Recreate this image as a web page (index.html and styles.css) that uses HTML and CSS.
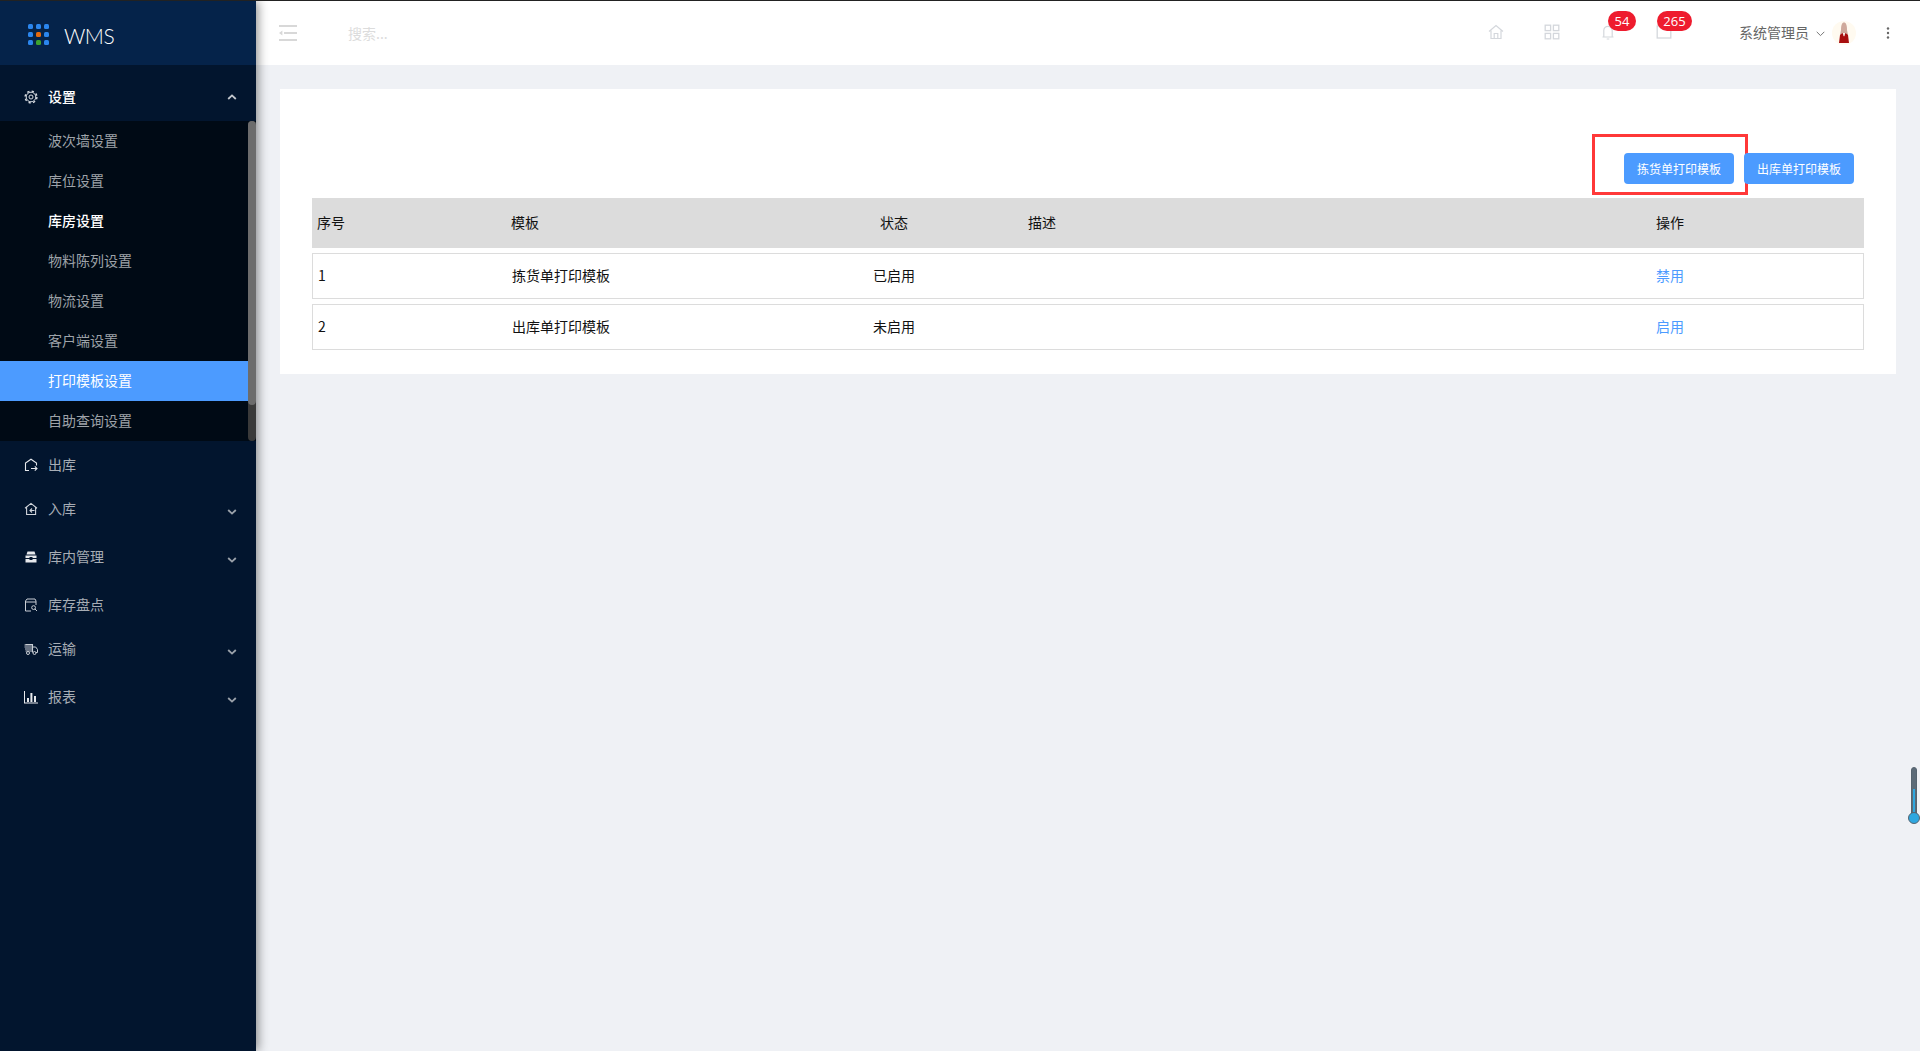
FILE: index.html
```html
<!DOCTYPE html>
<html lang="zh-CN">
<head>
<meta charset="utf-8">
<title>WMS</title>
<link rel="stylesheet" href="styles.css">
</head>
<body>
<div class="app">
  <aside class="sidebar">
    <div class="brand">
      <svg class="brand-dots" width="24" height="24" viewBox="0 0 24 24">
        <g fill="#2b86ee">
          <rect x="2" y="2" width="5" height="5" rx="1.5"/><rect x="10" y="2" width="5" height="5" rx="1.5"/><rect x="18" y="2" width="5" height="5" rx="1.5"/>
          <rect x="2" y="10" width="5" height="5" rx="1.5"/><rect x="18" y="10" width="5" height="5" rx="1.5"/>
          <rect x="2" y="18" width="5" height="5" rx="1.5"/><rect x="18" y="18" width="5" height="5" rx="1.5"/>
        </g>
        <rect x="10" y="10" width="5" height="5" rx="1.5" fill="#e8690c"/>
        <rect x="10" y="18" width="5" height="5" rx="1.5" fill="#3da32f"/>
      </svg>
      <span class="brand-name">WMS</span>
    </div>
    <nav class="nav">
      <a class="nav-item nav-open">
        <svg class="nav-icon" viewBox="0 0 14 14" fill="none" stroke="#d8dce2"><circle cx="7" cy="7" r="4.800" stroke-width="1"/><circle cx="7" cy="7" r="5.900" stroke-width="1.400" stroke-dasharray="2.300 2.330"/><circle cx="7" cy="7" r="2" stroke-width="1"/></svg>
        <span class="nav-label">设置</span>
        <svg class="nav-chevron" viewBox="0 0 10 6" fill="none" stroke="#c4c8ce" stroke-width="1.8"><path d="M1.200 5L5 1.400 8.800 5"/></svg>
      </a>
      <div class="submenu">
        <div class="submenu-list">
          <a class="sub-item">波次墙设置</a>
          <a class="sub-item">库位设置</a>
          <a class="sub-item sub-hover">库房设置</a>
          <a class="sub-item">物料陈列设置</a>
          <a class="sub-item">物流设置</a>
          <a class="sub-item">客户端设置</a>
          <a class="sub-item sub-active">打印模板设置</a>
          <a class="sub-item">自助查询设置</a>
        </div>
        <div class="scrollbar"><div class="scroll-thumb"></div></div>
      </div>
      <a class="nav-item nav-tall">
        <svg class="nav-icon" viewBox="0 0 14 14" fill="none" stroke="#e6e8ec" stroke-width="1.100"><path d="M2 12.500h-.5V5L7 1.200 12.500 5v2.500M7 10.500h6M10.800 8.300L13 10.500l-2.200 2.200M2 12.500h3"/></svg>
        <span class="nav-label">出库</span>
      </a>
      <a class="nav-item nav-short">
        <svg class="nav-icon" viewBox="0 0 14 14" fill="none" stroke="#d0d4da" stroke-width="1.100"><path d="M1 6.200L7 1.400l6 4.800M2.600 5.500v7h9v-7M10.500 8.500H6M8 6.500l-2 2 2 2"/></svg>
        <span class="nav-label">入库</span>
        <svg class="nav-chevron" viewBox="0 0 10 6" fill="none" stroke="#9aa1aa" stroke-width="1.800"><path d="M1.200 1L5 4.600 8.800 1"/></svg>
      </a>
      <a class="nav-item nav-tall">
        <svg class="nav-icon" viewBox="0 0 14 14" fill="#e6e8ec"><path d="M3.500 1.500h7l1 3h-9zM1.500 5.500h11v2.500h-4v-1h-3v1h-4zM1.500 9h4v1h3V9h4v3.500h-11z"/></svg>
        <span class="nav-label">库内管理</span>
        <svg class="nav-chevron" viewBox="0 0 10 6" fill="none" stroke="#9aa1aa" stroke-width="1.800"><path d="M1.200 1L5 4.600 8.800 1"/></svg>
      </a>
      <a class="nav-item nav-tall">
        <svg class="nav-icon" viewBox="0 0 14 14" fill="none" stroke="#c9ced5" stroke-width="1"><path d="M7 13H1.500V3L3 1h8l1 2v4M1.500 4h10.500"/><circle cx="9.600" cy="9.600" r="1.900"/><path d="M11 11l2 2"/></svg>
        <span class="nav-label">库存盘点</span>
      </a>
      <a class="nav-item nav-short">
        <svg class="nav-icon" viewBox="0 0 14 14" fill="none" stroke="#c9ced5"><path d="M.5 3h8M.5 5h8M1 7h7.500M1.500 9h7M1.500 2.500h7v8" stroke-width="1.100"/><path d="M9 5h2.700l1.800 2.500v3H12" stroke-width="1"/><circle cx="4" cy="11" r="1.500" stroke-width="1"/><circle cx="10.500" cy="11" r="1.500" stroke-width="1"/></svg>
        <span class="nav-label">运输</span>
        <svg class="nav-chevron" viewBox="0 0 10 6" fill="none" stroke="#9aa1aa" stroke-width="1.800"><path d="M1.200 1L5 4.600 8.800 1"/></svg>
      </a>
      <a class="nav-item nav-tall">
        <svg class="nav-icon" viewBox="0 0 14 14" fill="#e6e8ec"><path d="M0 1h1v11.500h13.500v1H0z"/><path d="M3 8h2v4H3zM6.400 3h2v9h-2zM10 6h2v6h-2z"/></svg>
        <span class="nav-label">报表</span>
        <svg class="nav-chevron" viewBox="0 0 10 6" fill="none" stroke="#9aa1aa" stroke-width="1.800"><path d="M1.200 1L5 4.600 8.800 1"/></svg>
      </a>
    </nav>
  </aside>

  <div class="main">
    <header class="topbar">
      <svg class="menu-toggle" width="18" height="16" viewBox="0 0 18 16" fill="#d8d8d8"><rect width="18" height="2" y="0"/><rect width="13" height="2" x="5" y="7"/><rect width="18" height="2" y="14"/><path d="M0 8l3.400-2.600v5.200z"/></svg>
      <span class="search">搜索...</span>
      <div class="top-actions">
        <span class="top-icon"><svg width="16" height="16" viewBox="0 0 16 16" fill="none" stroke="#d4d7dc" stroke-width="1.200"><path d="M1 7.500L8 1.500l7 6M3 6.500v8h10v-8M6.200 14.500v-5h3.600v5"/></svg></span>
        <span class="top-icon"><svg width="16" height="16" viewBox="0 0 16 16" fill="none" stroke="#d4d7dc" stroke-width="1.300"><rect x="1.200" y="1.200" width="5.400" height="5.400"/><rect x="9.400" y="1.200" width="5.400" height="5.400"/><rect x="1.200" y="9.400" width="5.400" height="5.400"/><rect x="9.400" y="9.400" width="5.400" height="5.400"/></svg></span>
        <span class="top-icon"><svg width="16" height="16" viewBox="0 0 16 16" fill="none" stroke="#d4d7dc" stroke-width="1.200"><path d="M2.500 13h11M3.800 13V6.500a4.200 4.200 0 018.400 0V13M6.700 15h2.600"/></svg><span class="badge badge-bell">54</span></span>
        <span class="top-icon"><svg width="16" height="16" viewBox="0 0 16 16" fill="none" stroke="#d4d7dc" stroke-width="1.300"><rect x="1.200" y="2" width="13.600" height="12"/></svg><span class="badge badge-mail">265</span></span>
      </div>
      <div class="user">
        <span class="user-name">系统管理员</span>
        <svg class="user-chevron" width="9" height="6" viewBox="0 0 9 6" fill="none" stroke="#777" stroke-width="1"><path d="M.7.800L4.500 4.600 8.300.800"/></svg>
        <svg class="avatar" width="24" height="24" viewBox="0 0 24 24"><circle cx="12" cy="12" r="12" fill="#fffaf0"/><path d="M9 9c0-5 1-7.500 3-7.500S15 4 15 9l1 5H8z" fill="#cfa99c"/><path d="M7 22l1-8 2.500-2L12 15.500 13.500 12l2.500 2 1 8z" fill="#a80f0f"/><path d="M11 12h2l-1 3.500z" fill="#fff"/></svg>
      </div>
      <svg class="more" width="4" height="12" viewBox="0 0 4 12" fill="#666"><circle cx="2" cy="1.500" r="1.200"/><circle cx="2" cy="6" r="1.200"/><circle cx="2" cy="10.500" r="1.200"/></svg>
    </header>

    <main class="content">
      <section class="card">
        <div class="toolbar">
          <button class="btn btn-marked">拣货单打印模板<span class="marker"></span></button>
          <button class="btn">出库单打印模板</button>
        </div>
        <div class="table">
          <div class="thead grid">
            <span class="c-no">序号</span>
            <span>模板</span>
            <span class="c-center">状态</span>
            <span>描述</span>
            <span>操作</span>
          </div>
          <div class="trow grid">
            <span class="c-no">1</span>
            <span class="c-name">拣货单打印模板</span>
            <span class="c-center">已启用</span>
            <span></span>
            <a class="link">禁用</a>
          </div>
          <div class="trow grid">
            <span class="c-no">2</span>
            <span class="c-name">出库单打印模板</span>
            <span class="c-center">未启用</span>
            <span></span>
            <a class="link">启用</a>
          </div>
        </div>
      </section>
    </main>
  </div>
</div>
<div class="thermo"><div class="thermo-tube"><div class="thermo-fill"></div></div><div class="thermo-bulb"></div></div>
</body>
</html>
```
FILE: styles.css
```css
* { box-sizing: border-box; }
html, body { margin: 0; height: 100%; overflow: hidden; }
body {
  font-family: "Noto Sans CJK SC", "Noto Sans", sans-serif;
  font-size: 14px;
  color: #111;
  background: #eff1f5;
  border-top: 1px solid #222;
}
a { color: inherit; text-decoration: none; }

.app { display: flex; height: 1050px; }

.sidebar {
  width: 256px;
  flex: none;
  background: #02152e;
  box-shadow: 2px 0 10px rgba(0, 0, 0, .45);
  position: relative;
  z-index: 2;
}
.brand {
  height: 64px;
  background: #05234a;
  display: flex;
  align-items: center;
  padding-left: 26px;
}
.brand-dots { margin-top: 2px; }
.brand-name {
  margin-left: 14px;
  color: #fff;
  font-family: Lato, sans-serif;
  font-weight: 300;
  font-size: 21px;
  letter-spacing: -.5px;
  line-height: 1;
  margin-top: 4px;
}
.nav-item {
  display: flex;
  align-items: center;
  padding-left: 24px;
  padding-right: 19px;
  color: #a7adb5;
}
.nav-open { height: 56px; color: #fff; font-weight: 500; }
.nav-tall { height: 48px; }
.nav-short { height: 44px; }
.nav-icon { width: 14px; height: 14px; flex: none; }
.nav-label { margin-left: 10px; flex: 1; line-height: 20px; padding-bottom: 2px; }
.nav-chevron { width: 10px; height: 6px; flex: none; }
.nav-open .nav-label { padding-bottom: 0; padding-top: 6px; }
.nav-open .nav-icon { margin-top: 8px; }
.nav-open .nav-chevron { margin-top: 8px; }
.nav-tall .nav-chevron { margin-top: 6px; }
.nav-short .nav-chevron { margin-top: 2px; }
.nav-short .nav-label { padding-bottom: 6px; }
.nav-short .nav-icon { margin-bottom: 4px; }

.submenu { display: flex; height: 320px; background: #000a15; }
.submenu-list { flex: 1; }
.sub-item {
  display: block;
  height: 40px;
  line-height: 38px;
  padding-left: 48px;
  color: #9ea3a9;
}
.sub-hover { color: #fff; font-weight: 500; }
.sub-active { background: #4c9bff; color: #fff; }
.scrollbar { width: 8px; background: #3a3a3a; border-radius: 4px; }
.scroll-thumb { height: 284px; background: #6c6c6c; border-radius: 4px; }

.main { flex: 1; display: flex; flex-direction: column; min-width: 0; }
.topbar {
  height: 64px;
  background: #fff;
  display: flex;
  align-items: center;
}
.menu-toggle { margin-left: 23px; }
.search { margin-left: 51px; color: #dcdcdc; }
.top-actions { margin-left: auto; display: flex; gap: 40px; margin-top: -2px; }
.top-icon { position: relative; width: 16px; height: 16px; display: block; }
.top-icon svg { display: block; }
.badge {
  position: absolute;
  top: -13px;
  height: 20px;
  line-height: 20px;
  border-radius: 10px;
  background: #ee1c2e;
  color: #fff;
  font-family: "Open Sans", sans-serif;
  font-size: 13px;
  text-align: center;
}
.badge-bell { left: 8px; width: 28px; }
.badge-mail { left: 1px; width: 35px; }
.user { display: flex; align-items: center; margin-left: 67px; }
.user-name { color: #666; line-height: 20px; padding-bottom: 3px; }
.user-chevron { margin-left: 7px; margin-top: 1px; }
.avatar { margin-left: 7px; }
.more { margin-left: 30px; margin-right: 30px; }

.content { flex: 1; padding: 24px 24px 0; }
.card { background: #fff; height: 285px; padding: 64px 32px 0; }
.toolbar { display: flex; justify-content: flex-end; gap: 10px; padding-right: 10px; height: 45px; }
.btn {
  width: 110px;
  height: 31px;
  padding: 0 0 1px;
  border: 0;
  border-radius: 4px;
  background: #4c9bff;
  color: #fff;
  font: inherit;
  font-size: 12px;
  position: relative;
}
.marker {
  position: absolute;
  left: -32px;
  top: -19px;
  width: 156px;
  height: 61px;
  border: 3px solid #ff3838;
  pointer-events: none;
}
.grid {
  display: grid;
  align-items: center;
  padding-bottom: 2px;
}
.c-center { text-align: center; }
.c-name { padding-left: 1px; }
.thead {
  height: 50px;
  background: #dcdcdc;
  padding-left: 5px;
  margin-bottom: 5px;
  grid-template-columns: 194px 249px 268px 628px 1fr;
}
.trow {
  height: 46px;
  border: 1px solid #dcdcdc;
  margin-bottom: 5px;
  grid-template-columns: 198px 249px 268px 628px 1fr;
}
.trow .c-no { padding-left: 5px; }
.link { color: #4c9bff; }

.thermo { position: fixed; right: 0; top: 767px; width: 12px; height: 58px; }
.thermo-tube {
  position: absolute;
  left: 3px;
  top: 0;
  width: 6px;
  height: 50px;
  background: #5c6b78;
  border: 1px solid #55636f;
  border-radius: 3px 3px 0 0;
}
.thermo-fill { position: absolute; left: 1px; right: 1px; top: 21px; bottom: 0; background: #2ea7e0; }
.thermo-bulb {
  position: absolute;
  left: 0;
  top: 45px;
  width: 12px;
  height: 12px;
  border-radius: 50%;
  background: #2ea7e0;
  border: 1px solid #55636f;
}
```
